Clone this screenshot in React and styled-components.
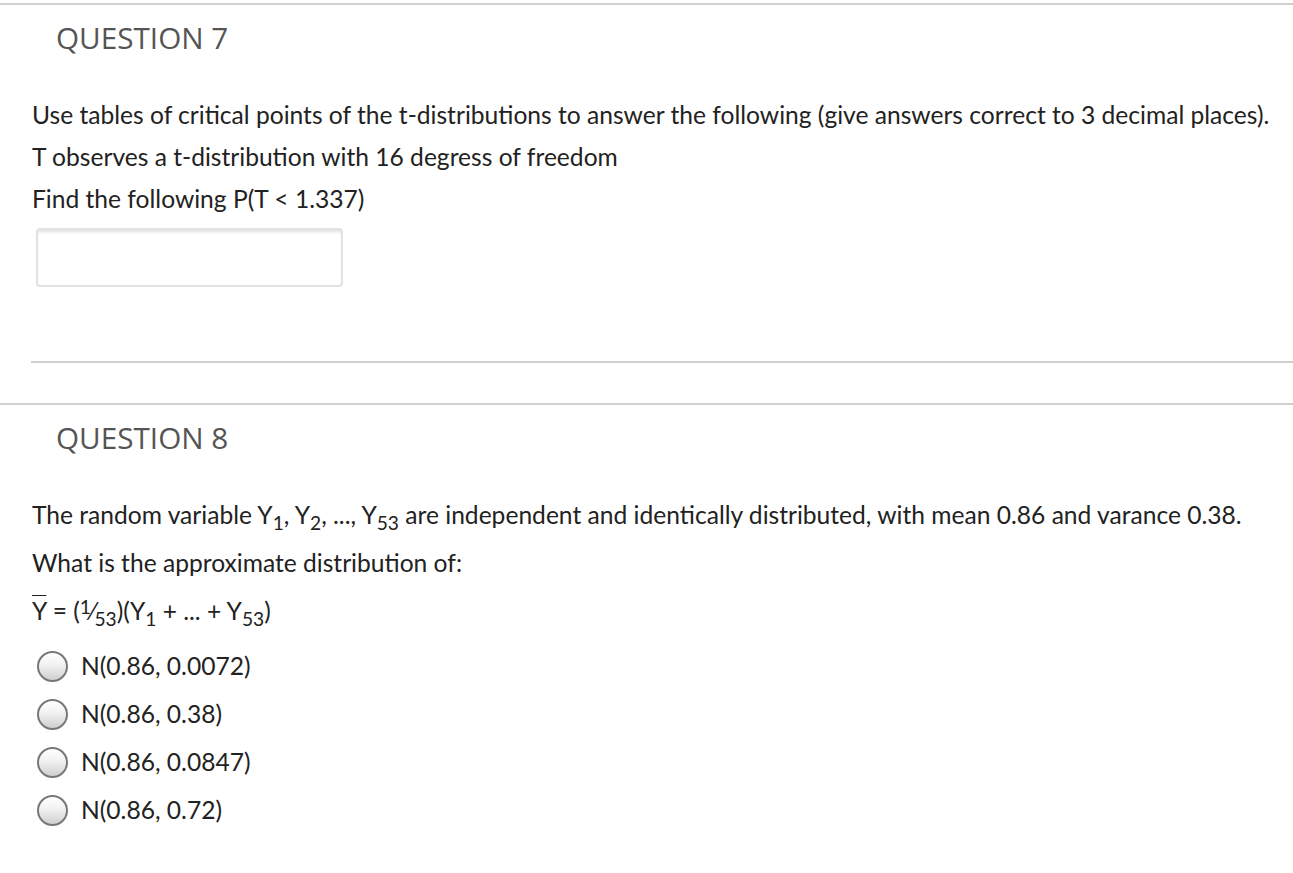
import React from "react";
import styled, { createGlobalStyle } from "styled-components";

const Global = createGlobalStyle`
  html, body {
    margin: 0;
    padding: 0;
    background: #fff;
  }
  body {
    padding-top: 3px;
  }
`;

const Question = styled.section`
  border-top: 2px solid #d0d0d0;
  margin-bottom: ${(p) => p.gap || 0}px;
`;

const Heading = styled.h2`
  margin: 0;
  padding: 13px 0 0 56px;
  font-family: "Open Sans", sans-serif;
  font-weight: 400;
  font-size: 29.7px;
  line-height: 40px;
  color: #555;
`;

const Body = styled.div`
  margin: ${(p) => p.top || 36}px 0 0 31px;
  padding-left: 1px;
  font-family: Lato, "Liberation Sans", sans-serif;
  font-size: 24.6px;
  color: #222;
  border-bottom: ${(p) => (p.divider ? "2px solid #d0d0d0" : "none")};
  padding-bottom: ${(p) => (p.divider ? 74 : 0)}px;
`;

const Line = styled.p`
  margin: 0;
  line-height: ${(p) => p.lh || 42}px;
  white-space: nowrap;
`;

const Sub = styled.sub`
  font-size: 0.78em;
  line-height: 0;
  vertical-align: -6px;
`;

const Sup = styled.sup`
  font-size: 0.78em;
  line-height: 0;
  vertical-align: 6px;
`;

const Bar = styled.span`
  text-decoration: overline;
  text-decoration-thickness: 1px;
`;

const AnswerInput = styled.input`
  display: block;
  box-sizing: border-box;
  margin: 8px 0 0 4px;
  width: 307px;
  height: 59px;
  border: 2px solid #e2e2e2;
  border-radius: 4px;
  box-shadow: inset 0 3px 3px -1px rgba(0, 0, 0, 0.12);
  background: #fff;
  outline: none;
`;

const Options = styled.div`
  margin-top: 7px;
`;

const Option = styled.label`
  display: flex;
  align-items: center;
  gap: 13px;
  height: 48px;
  padding-left: 5px;
  line-height: 48px;
`;

const Radio = styled.input`
  appearance: none;
  margin: 0;
  width: 31px;
  height: 31px;
  flex: none;
  border: 2px solid #777;
  border-radius: 50%;
  background: linear-gradient(to bottom, #ffffff 0%, #f1f1f1 45%, #cfcfcf 100%);
`;

const options = [
  "N(0.86, 0.0072)",
  "N(0.86, 0.38)",
  "N(0.86, 0.0847)",
  "N(0.86, 0.72)",
];

export default function App() {
  return (
    <>
      <Global />
      <Question gap={40}>
        <Heading>QUESTION 7</Heading>
        <Body divider>
          <Line>
            Use tables of critical points of the t-distributions to answer the
            following (give answers correct to 3 decimal places).
          </Line>
          <Line>T observes a t-distribution with 16 degress of freedom</Line>
          <Line>Find the following P(T &lt; 1.337)</Line>
          <AnswerInput type="text" />
        </Body>
      </Question>
      <Question>
        <Heading>QUESTION 8</Heading>
        <Body top={33}>
          <Line lh={48}>
            The random variable Y<Sub>1</Sub>, Y<Sub>2</Sub>, ..., Y
            <Sub>53</Sub> are independent and identically distributed, with
            mean 0.86 and varance 0.38.
          </Line>
          <Line lh={48}>What is the approximate distribution of:</Line>
          <Line lh={48}>
            <Bar>Y</Bar> = (<Sup>1</Sup>⁄<Sub>53</Sub>)(Y<Sub>1</Sub> + ... + Y
            <Sub>53</Sub>)
          </Line>
          <Options>
            {options.map((o) => (
              <Option key={o}>
                <Radio type="radio" name="q8" />
                {o}
              </Option>
            ))}
          </Options>
        </Body>
      </Question>
    </>
  );
}
